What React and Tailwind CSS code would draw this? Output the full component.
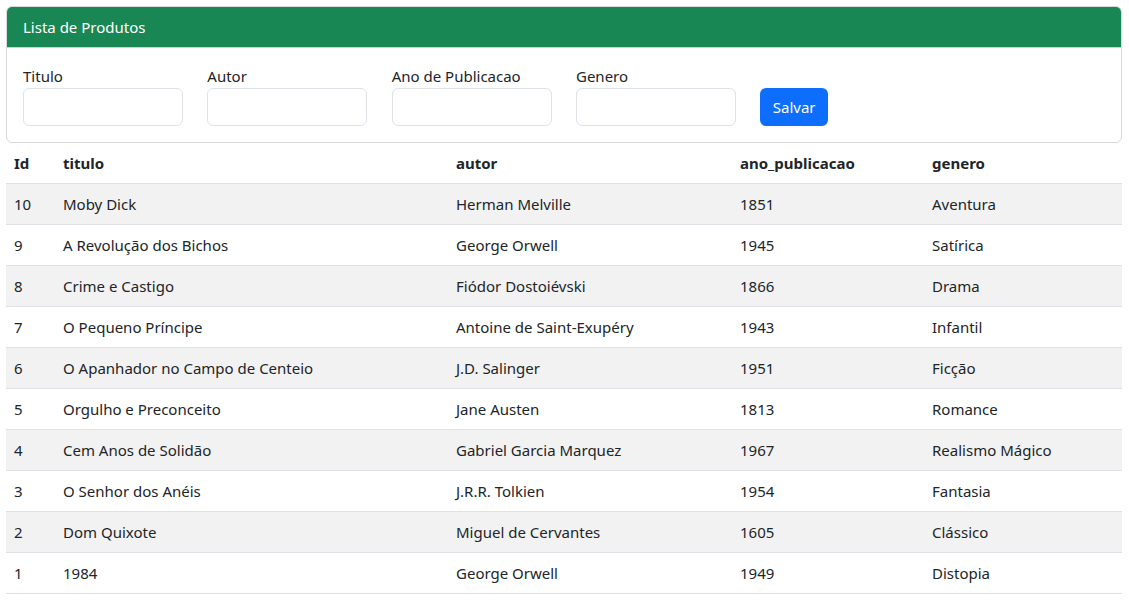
import React from 'react';

const livros = [
  { id: 10, titulo: 'Moby Dick', autor: 'Herman Melville', ano: 1851, genero: 'Aventura' },
  { id: 9, titulo: 'A Revolução dos Bichos', autor: 'George Orwell', ano: 1945, genero: 'Satírica' },
  { id: 8, titulo: 'Crime e Castigo', autor: 'Fiódor Dostoiévski', ano: 1866, genero: 'Drama' },
  { id: 7, titulo: 'O Pequeno Príncipe', autor: 'Antoine de Saint-Exupéry', ano: 1943, genero: 'Infantil' },
  { id: 6, titulo: 'O Apanhador no Campo de Centeio', autor: 'J.D. Salinger', ano: 1951, genero: 'Ficção' },
  { id: 5, titulo: 'Orgulho e Preconceito', autor: 'Jane Austen', ano: 1813, genero: 'Romance' },
  { id: 4, titulo: 'Cem Anos de Solidão', autor: 'Gabriel Garcia Marquez', ano: 1967, genero: 'Realismo Mágico' },
  { id: 3, titulo: 'O Senhor dos Anéis', autor: 'J.R.R. Tolkien', ano: 1954, genero: 'Fantasia' },
  { id: 2, titulo: 'Dom Quixote', autor: 'Miguel de Cervantes', ano: 1605, genero: 'Clássico' },
  { id: 1, titulo: '1984', autor: 'George Orwell', ano: 1949, genero: 'Distopia' },
];

const campos = ['Titulo', 'Autor', 'Ano de Publicacao', 'Genero'];

const App = () => {
  return (
    <div className="min-h-screen bg-white pl-[6px] pr-[7px] pt-[6px] text-[16px] leading-6 text-[#212529] [font-family:'Noto_Sans',sans-serif]">
      <div className="rounded-md border border-[#d9d9d9] overflow-hidden">
        <div className="bg-[#198754] px-4 py-2 border-b border-[#d0d0d0] text-white text-[15px]">Lista de Produtos</div>
        <div className="flex items-end gap-[24.33px] p-4">
          {campos.map((c) => (
            <div key={c} className="flex flex-col w-[160px]">
              <label className="text-[15px]">{c}</label>
              <input className="h-[38px] w-[160px] rounded-md border border-[#dee2e6] bg-white" />
            </div>
          ))}
          <button className="h-[38px] px-[12.5px] rounded-md bg-[#0d6efd] text-white text-[15px]">Salvar</button>
        </div>
      </div>

      <table className="w-full border-collapse text-[15px]">
        <thead>
          <tr className="border-b border-[#dee2e6]">
            <th className="w-[49px] text-left font-bold px-2 py-2 leading-6">Id</th>
            <th className="w-[393px] text-left font-bold px-2 py-2 leading-6">titulo</th>
            <th className="w-[284px] text-left font-bold px-2 py-2 leading-6">autor</th>
            <th className="w-[192px] text-left font-bold px-2 py-2 leading-6">ano_publicacao</th>
            <th className="text-left font-bold px-2 py-2 leading-6">genero</th>
          </tr>
        </thead>
        <tbody>
          {livros.map((l, i) => (
            <tr key={l.id} className={`border-b border-[#dee2e6] ${i % 2 === 0 ? 'bg-[#f2f2f2]' : 'bg-white'}`}>
              <td className="px-2 py-2 leading-6">{l.id}</td>
              <td className="px-2 py-2 leading-6">{l.titulo}</td>
              <td className="px-2 py-2 leading-6">{l.autor}</td>
              <td className="px-2 py-2 leading-6">{l.ano}</td>
              <td className="px-2 py-2 leading-6">{l.genero}</td>
            </tr>
          ))}
        </tbody>
      </table>
    </div>
  );
};

export default App;
